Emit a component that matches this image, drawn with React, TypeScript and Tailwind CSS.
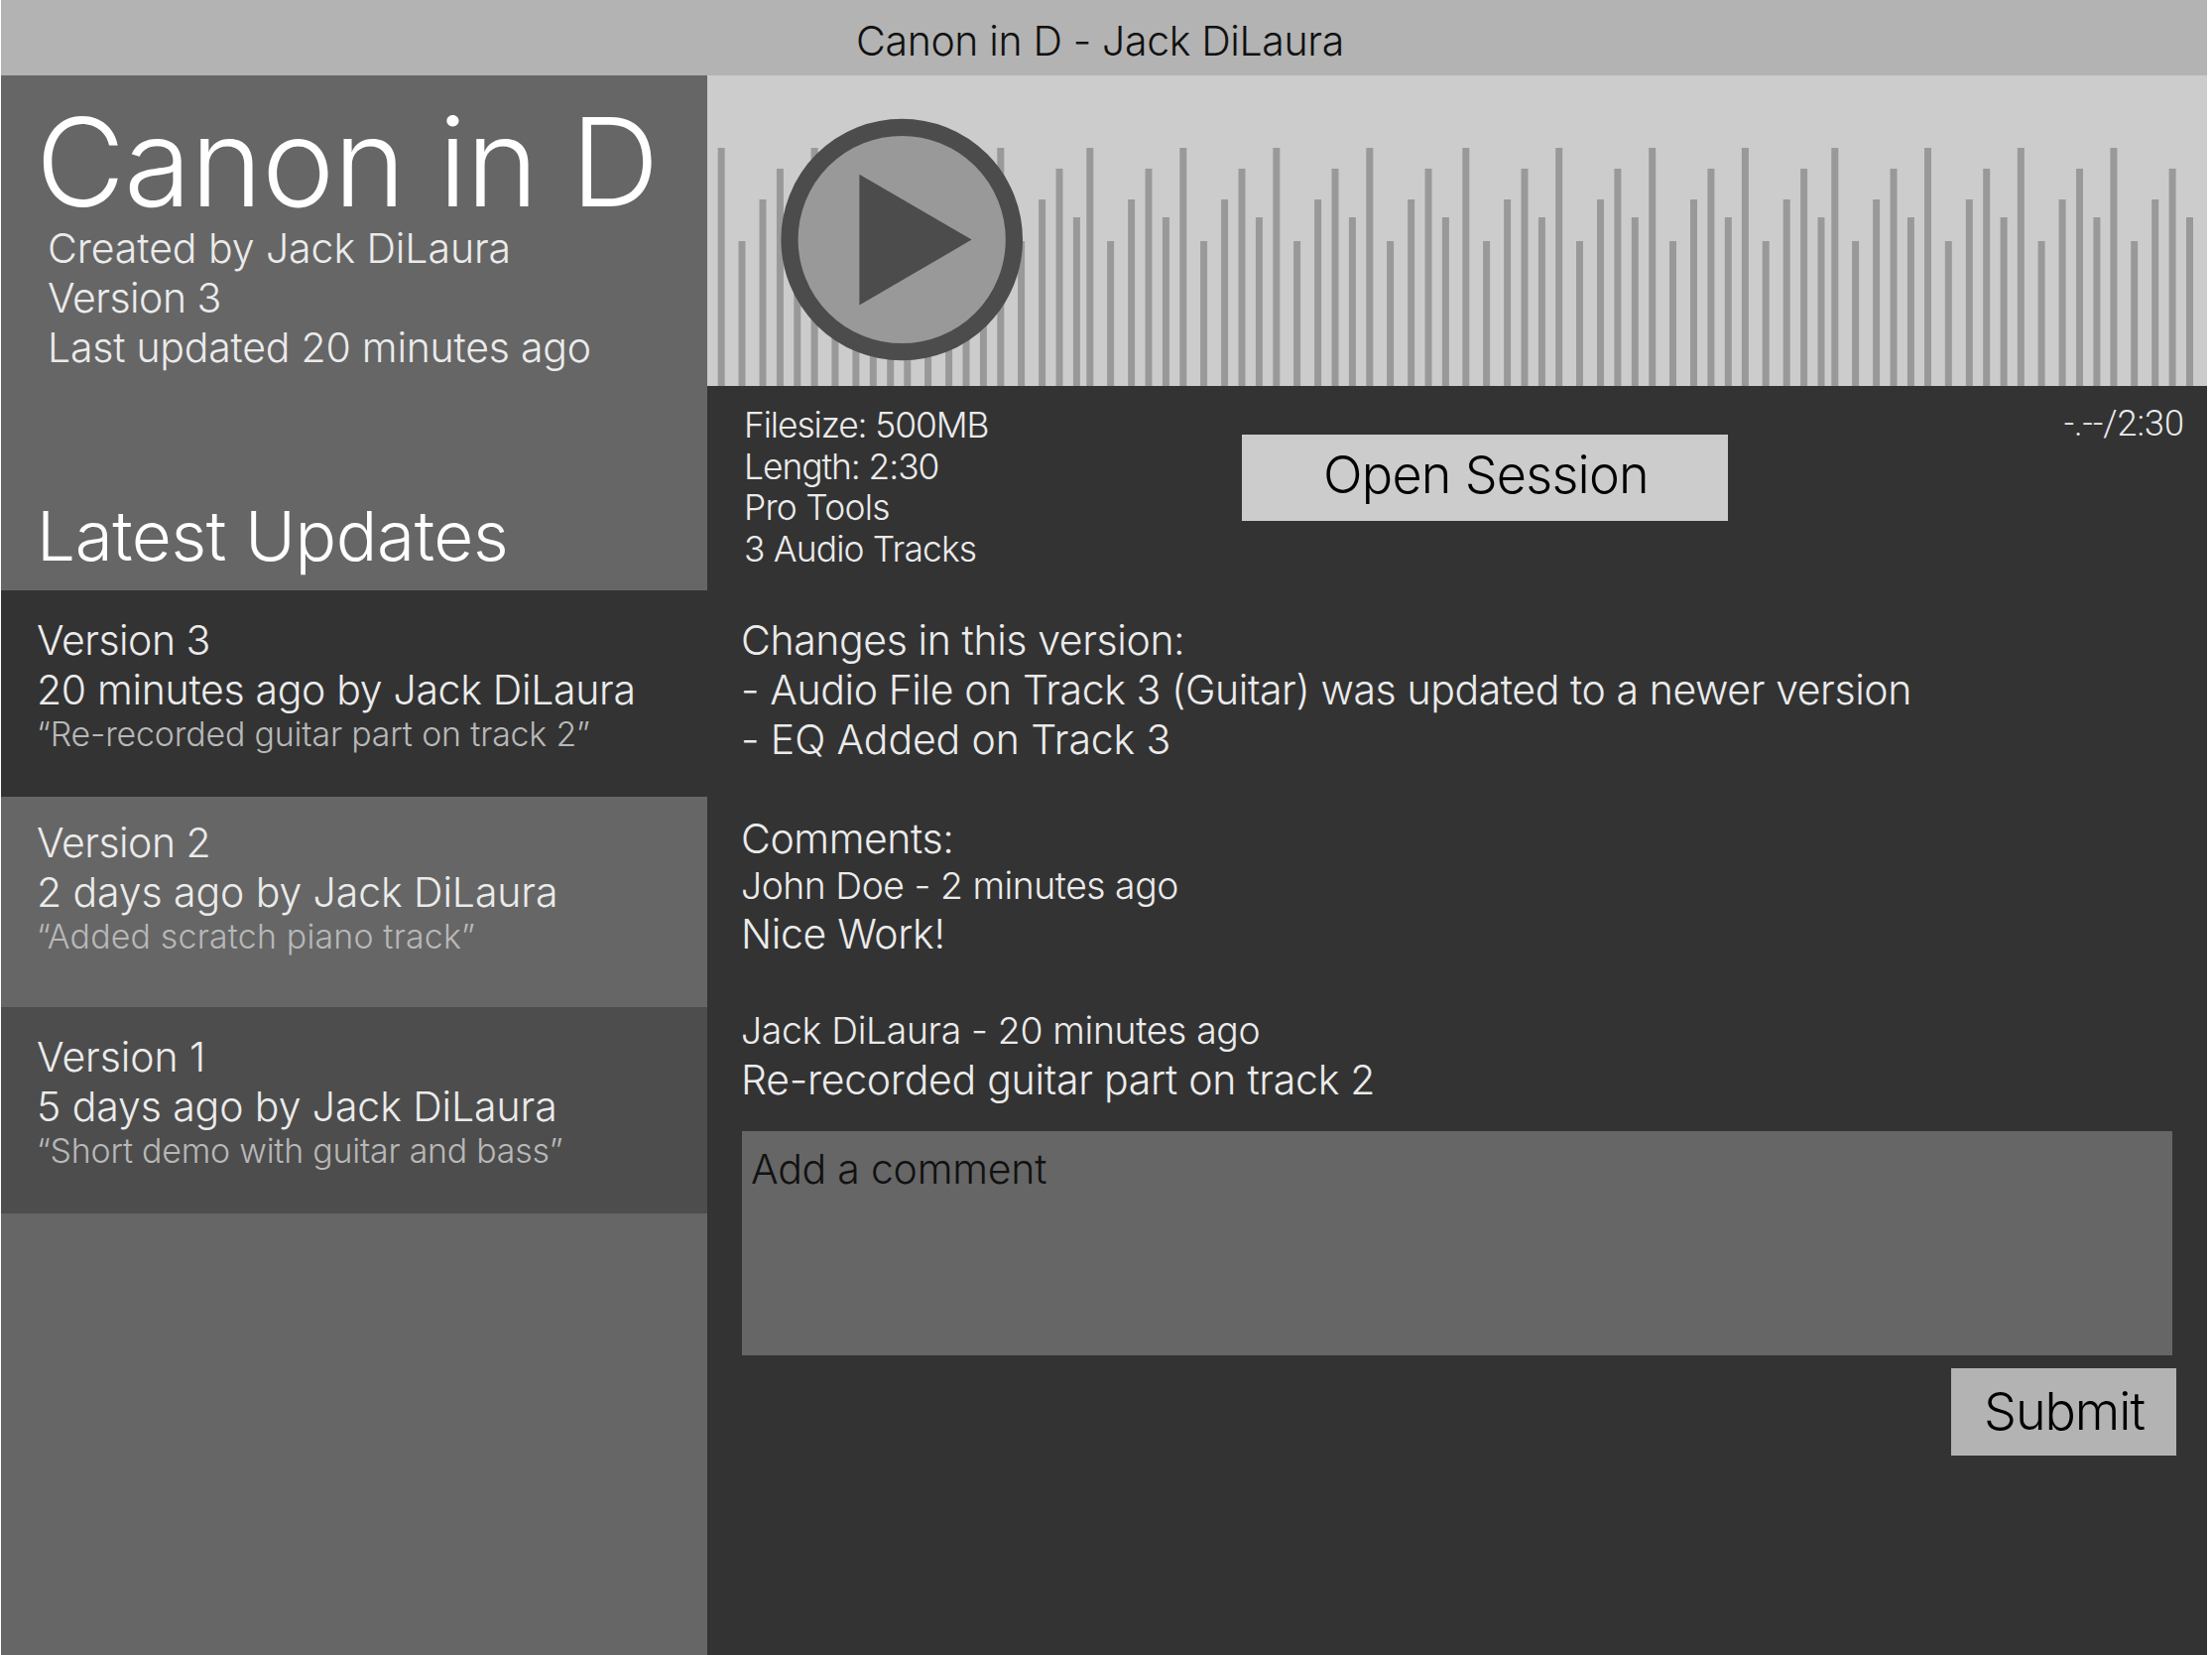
import React from "react";

const BAR_HEIGHTS = [240, 146, 188, 219, 170];
const BAR_OFFSETS = [0, 20.8, 41.8, 59.2, 76.6];
const GROUP_STARTS = [
  10.7, 104.6, 198.3, 292.3, 382.3, 476.3, 570.3, 664.3, 761.3, 855.2, 949.2, 1042.9, 1133.3, 1227, 1320.8, 1414.4,
];

function Waveform() {
  return (
    <svg className="block h-[313px] w-[1512px]" viewBox="0 0 1512 313">
      {GROUP_STARTS.map((start) =>
        BAR_HEIGHTS.map((height, i) => (
          <rect
            key={`${start}-${i}`}
            x={start + BAR_OFFSETS[i]}
            y={313 - height}
            width={7}
            height={height}
            fill="#999999"
          />
        )),
      )}
      <circle cx="196.2" cy="165.5" r="113.2" fill="#999999" stroke="#4c4c4c" strokeWidth="17.2" />
      <path d="M153.4 99.8V231.6L266.6 165.6Z" fill="#4c4c4c" />
    </svg>
  );
}

const VERSIONS = [
  {
    box: "h-[208px] bg-[#333333] pt-[25px]",
    title: "Version 3",
    titleSpacing: "tracking-[-0.53px]",
    when: "20 minutes ago by Jack DiLaura",
    whenSpacing: "tracking-[-0.32px]",
    note: "“Re-recorded guitar part on track 2”",
    noteSpacing: "tracking-[-0.17px]",
  },
  {
    box: "h-[212px] bg-[#666666] pt-[21px]",
    title: "Version 2",
    titleSpacing: "tracking-[-0.53px]",
    when: "2 days ago by Jack DiLaura",
    whenSpacing: "tracking-[-0.1px]",
    note: "“Added scratch piano track”",
    noteSpacing: "tracking-[0.18px]",
  },
  {
    box: "h-[208px] bg-[#4d4d4d] pt-[25px]",
    title: "Version 1",
    titleSpacing: "tracking-[-0.1px]",
    when: "5 days ago by Jack DiLaura",
    whenSpacing: "tracking-[-0.1px]",
    note: "“Short demo with guitar and bass”",
    noteSpacing: "tracking-[-0.22px]",
  },
];

function Sidebar() {
  return (
    <aside className="w-[712px] shrink-0 bg-[#666666] text-[#ebebeb]">
      <div className="h-[519px] pt-[25px]">
        <h1 className="pl-[35px] text-[123.7px] leading-[124px] tracking-[-0.94px] text-white">Canon in D</h1>
        <div className="pl-[47px] text-[41px] leading-[50px]">
          <p className="tracking-[-0.07px]">Created by Jack DiLaura</p>
          <p className="tracking-[-0.53px]">Version 3</p>
          <p className="tracking-[-0.23px]">Last updated 20 minutes ago</p>
        </div>
        <h2 className="mt-[125px] pl-[36px] text-[69.2px] leading-[80px] tracking-[-0.42px] text-white">
          Latest Updates
        </h2>
      </div>
      {VERSIONS.map((v) => (
        <div key={v.title} className={`pl-[36px] text-[41px] leading-[50px] ${v.box}`}>
          <p className={v.titleSpacing}>{v.title}</p>
          <p className={v.whenSpacing}>{v.when}</p>
          <p className={`text-[33.9px] leading-[40px] text-[#b8b8b8] ${v.noteSpacing}`}>{v.note}</p>
        </div>
      ))}
    </aside>
  );
}

function SessionInfo() {
  return (
    <div className="flex h-[231px] items-start pl-[37px]">
      <div className="w-[502px] pt-[19px] text-[35.4px] leading-[41.6px]">
        <p className="tracking-[-1.12px]">Filesize: 500MB</p>
        <p className="tracking-[-1.05px]">Length: 2:30</p>
        <p className="tracking-[-0.75px]">Pro Tools</p>
        <p className="tracking-[-0.84px]">3 Audio Tracks</p>
      </div>
      <button className="mt-[49px] flex h-[87px] w-[490px] items-start bg-[#cccccc] pt-[9px] pl-[82px] text-[52.1px] leading-[64px] tracking-[-0.75px] text-black">
        Open Session
      </button>
      <p className="mt-[17px] ml-auto pr-[23px] font-['Roboto',sans-serif] text-[36px] leading-[42px]">-.--/2:30</p>
    </div>
  );
}

function Details() {
  return (
    <div className="pl-[34px] text-[41px] leading-[50px]">
      <p className="tracking-[-0.4px]">Changes in this version:</p>
      <p className="tracking-[-0.41px]">- Audio File on Track 3 (Guitar) was updated to a newer version</p>
      <p className="tracking-[-0.12px]">- EQ Added on Track 3</p>

      <p className="mt-[51px] leading-[48px] tracking-[-0.42px]">Comments:</p>
      <p className="pt-px text-[37.3px] leading-[46px] tracking-[-0.46px]">John Doe - 2 minutes ago</p>
      <p className="leading-[51px] tracking-[-0.35px]">Nice Work!</p>
      <p className="mt-[49px] text-[37.3px] leading-[46px] tracking-[-0.31px]">Jack DiLaura - 20 minutes ago</p>
      <p className="leading-[52px] tracking-[-0.28px]">Re-recorded guitar part on track 2</p>

      <div className="mt-[26px] ml-px h-[226px] w-[1442px] bg-[#666666] pt-[13px] pl-[9px] tracking-[-0.24px] text-[#111111]">
        Add a comment
      </div>
      <button className="mt-[13px] mr-[31px] ml-auto flex h-[88px] w-[227px] items-start bg-[#b3b3b3] pt-[12px] pl-[33px] text-[52.1px] leading-[64px] tracking-[-1.03px] text-black">
        Submit
      </button>
    </div>
  );
}

export default function App() {
  return (
    <div className="h-[1668px] w-[2230px] overflow-hidden bg-white pr-[5px] pl-px font-['Inter',sans-serif] font-light whitespace-nowrap">
      <header className="h-[76px] bg-[#b3b3b3] pt-[16px] pl-[862px] text-[41px] leading-[50px] tracking-[-0.36px] text-[#111111]">
        Canon in D - Jack DiLaura
      </header>
      <div className="flex h-[1592px]">
        <Sidebar />
        <main className="w-[1512px] bg-[#333333] text-[#ebebeb]">
          <div className="bg-[#cccccc]">
            <Waveform />
          </div>
          <SessionInfo />
          <Details />
        </main>
      </div>
    </div>
  );
}
